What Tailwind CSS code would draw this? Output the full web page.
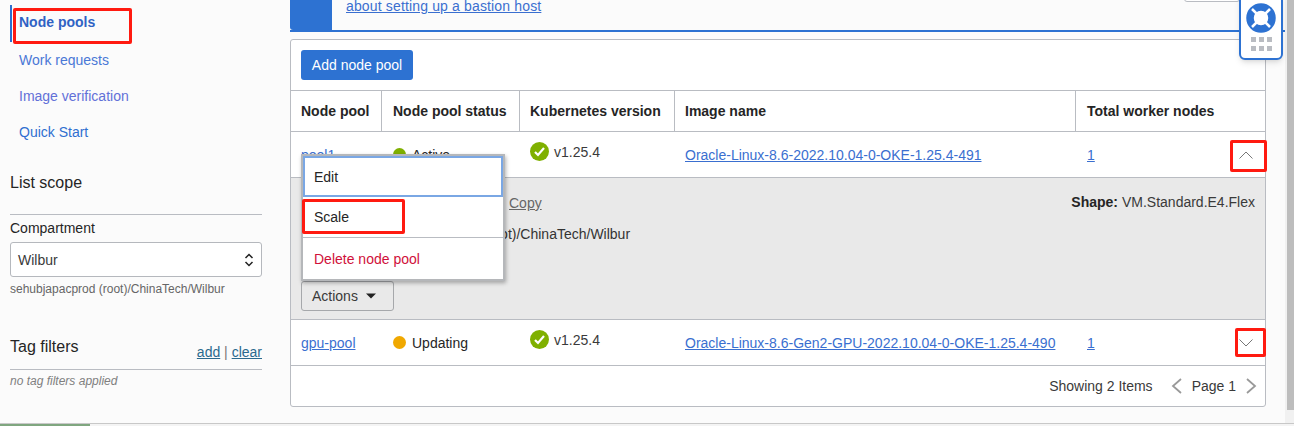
<!DOCTYPE html>
<html>
<head>
<meta charset="utf-8">
<script src="https://cdn.jsdelivr.net/npm/@tailwindcss/browser@4"></script>
</head>
<body class="m-0 bg-white">
<div class="relative h-[426px] w-[1294px] overflow-hidden bg-[#fbfbfb] font-['Liberation_Sans',Arial,sans-serif] text-[14px] leading-[18px] text-[#252525]">
  <div class="flex h-[423px]">
    <!-- Sidebar -->
    <aside class="w-[290px] shrink-0 pl-[10px] pr-[28px] pt-[5px]">
      <nav class="border-l-0 text-[#3a6fd0]">
        <div class="flex h-[37px] items-center border-l-2 border-[#2d6fd0] pl-[7px] pb-[3px] font-bold text-[#2f62c4]">Node pools</div>
        <div class="flex h-[36px] items-center pl-[9px] text-[#4a78d6]">Work requests</div>
        <div class="flex h-[36px] items-center pl-[9px] text-[#6270d8]">Image verification</div>
        <div class="flex h-[36px] items-center pl-[9px] text-[#2f6fd0]">Quick Start</div>
      </nav>
      <h2 class="mt-[23px] text-[16px] leading-[20px] text-[#252525]">List scope</h2>
      <div class="mt-[21px] border-t border-[#b9bcc2] pt-[5px]">
        <div class="leading-[17px]">Compartment</div>
        <div class="mt-[5px] flex h-[35px] items-center justify-between rounded-[3px] border border-[#b5b8bd] bg-white pl-[7px] pr-[7px] text-[#3a3a3a]">
          <span>Wilbur</span>
          <svg width="10" height="16" viewBox="0 0 10 16" fill="none" stroke="#222" stroke-width="1.5"><path d="M1.5 6 5 2.5 8.500 6M1.500 10 5 13.500 8.500 10"/></svg>
        </div>
        <div class="mt-[4px] text-[12px] leading-[16px] text-[#666]">sehubjapacprod (root)/ChinaTech/Wilbur</div>
      </div>
      <div class="mt-[40px] flex items-end justify-between pb-[8px]">
        <h2 class="text-[16px] leading-[20px] text-[#252525]">Tag filters</h2>
        <div class="translate-y-[4px] text-[#777]"><a class="text-[#2b6a8e] underline">add</a> | <a class="text-[#2b6a8e] underline">clear</a></div>
      </div>
      <div class="mt-[4px] border-t border-[#b9bcc2] pt-[3px] text-[12px] italic leading-[17px] text-[#808080]">no tag filters applied</div>
    </aside>

    <!-- Main -->
    <main class="w-[976px] shrink-0">
      <div class="flex h-[32px] border-b-2 border-[#2d72d2] mr-[-20px]">
        <div class="w-[42px] rounded-bl-[3px] bg-[#2d72d2]"></div>
        <a class="ml-[14px] block translate-y-[-3px] tracking-[0.15px] text-[#3a6fd0] underline">about setting up a bastion host</a>
      </div>
      <div class="mt-[7px] h-[368px] rounded-[3px] border border-[#b9bcc2] bg-white">
        <div class="h-[50px] px-[10px] pt-[10px]">
          <button class="h-[30px] w-[112px] rounded-[3px] bg-[#2d72d2] text-[14px] text-white">Add node pool</button>
        </div>
        <div class="grid h-[42px] grid-cols-[91px_138px_155px_401px_1fr] items-center border-y border-[#b9bcc2] font-bold text-[#252525]">
          <div class="flex h-full items-center border-r border-[#b9bcc2] pl-[10px]">Node pool</div>
          <div class="flex h-full items-center border-r border-[#b9bcc2] pl-[11px]">Node pool status</div>
          <div class="flex h-full items-center border-r border-[#b9bcc2] pl-[10px]">Kubernetes version</div>
          <div class="flex h-full items-center border-r border-[#b9bcc2] pl-[10px]">Image name</div>
          <div class="pl-[11px]">Total worker nodes</div>
        </div>
        <!-- Row 1 -->
        <div class="grid h-[46px] grid-cols-[91px_138px_155px_401px_1fr] items-center border-b border-[#b9bcc2]">
          <div class="pl-[10px]"><a class="text-[#3a6fd0] underline">pool1</a></div>
          <div class="flex items-center gap-[6px] pl-[11px]"><span class="size-[13px] rounded-full bg-[#7fb000]"></span>Active</div>
          <div class="flex -translate-y-[3px] items-center gap-[5px] pl-[10px] text-[#3a3a3a]">
            <svg width="19" height="19" viewBox="0 0 19 19"><circle cx="9.500" cy="9.500" r="9.500" fill="#7fb000"/><path d="M5 10l3 3 6-7" fill="none" stroke="#fff" stroke-width="2.200"/></svg>v1.25.4</div>
          <div class="pl-[10px]"><a class="text-[#3a6fd0] underline">Oracle-Linux-8.6-2022.10.04-0-OKE-1.25.4-491</a></div>
          <div class="flex items-center justify-between pl-[11px] pr-[12px]"><a class="text-[#3a6fd0] underline">1</a>
            <svg width="14" height="8" viewBox="0 0 14 8" fill="none" stroke="#777" stroke-width="1"><path d="M.5 7.500 7 1l6.500 6.500"/></svg></div>
        </div>
        <!-- Expanded -->
        <div class="flex h-[142px] justify-between border-b border-[#b9bcc2] bg-[#e9e9e9]">
          <div class="flex flex-col pl-[10px]">
            <div class="flex h-[50px] items-center pl-[208px] text-[#666] underline">Copy</div>
            <div class="pl-[182px] text-[#333] leading-[12px]">(root)/ChinaTech/Wilbur</div>
            <button class="mt-[41px] flex h-[30px] w-[93px] items-center gap-[8px] rounded-[3px] border border-[#a6a8ab] pl-[10px] text-[#3a3a3a]">Actions
              <svg width="10" height="6" viewBox="0 0 10 6"><path d="M0 .5h10L5 5.500z" fill="#222"/></svg></button>
          </div>
          <div class="pr-[10px] pt-[15px] text-[#3a3a3a]"><b class="text-[#252525]">Shape:</b> VM.Standard.E4.Flex</div>
        </div>
        <!-- Row 2 -->
        <div class="grid h-[46px] grid-cols-[91px_138px_155px_401px_1fr] items-center border-b border-[#b9bcc2]">
          <div class="pl-[10px]"><a class="text-[#3a6fd0] underline">gpu-pool</a></div>
          <div class="flex items-center gap-[6px] pl-[11px]"><span class="size-[13px] rounded-full bg-[#f0a800]"></span>Updating</div>
          <div class="flex -translate-y-[3px] items-center gap-[5px] pl-[10px] text-[#3a3a3a]">
            <svg width="19" height="19" viewBox="0 0 19 19"><circle cx="9.500" cy="9.500" r="9.500" fill="#7fb000"/><path d="M5 10l3 3 6-7" fill="none" stroke="#fff" stroke-width="2.200"/></svg>v1.25.4</div>
          <div class="pl-[10px]"><a class="text-[#3a6fd0] underline">Oracle-Linux-8.6-Gen2-GPU-2022.10.04-0-OKE-1.25.4-490</a></div>
          <div class="flex items-center justify-between pl-[11px] pr-[12px]"><a class="text-[#3a6fd0] underline">1</a>
            <svg width="14" height="8" viewBox="0 0 14 8" fill="none" stroke="#777" stroke-width="1"><path d="M.5.5 7 7l6.500-6.500"/></svg></div>
        </div>
        <!-- Footer -->
        <div class="flex h-[40px] items-center justify-end gap-[18px] pr-[8px] text-[#3a3a3a]">
          <span>Showing 2 Items</span>
          <div class="flex items-center gap-[10px]">
            <svg width="11" height="16" viewBox="0 0 11 16" fill="none" stroke="#999" stroke-width="1.800"><path d="M10 1 2 8l8 7"/></svg>
            <span>Page 1</span>
            <svg width="11" height="16" viewBox="0 0 11 16" fill="none" stroke="#999" stroke-width="1.800"><path d="M1 1l8 7-8 7"/></svg>
          </div>
        </div>
      </div>
    </main>
  </div>

  <!-- Bottom bar -->
  <div class="absolute bottom-0 left-0 right-0 h-[3px] border-t border-[#c8c8c8] bg-[#f4f4f4]">
    <div class="h-full w-[90px] bg-[#7fa67f]"></div>
  </div>

  <!-- Scrollbar -->
  <div class="absolute right-0 top-0 h-[423px] w-[9px] bg-[#f1f1f1]">
    <div class="ml-[2px] h-[410px] w-[7px] bg-[#bdbdbd]"></div>
  </div>

  <!-- Top right button piece -->
  <div class="absolute left-[1184px] top-[-10px] h-[12px] w-[56px] rounded-[3px] border border-[#b9bcc2] bg-white"></div>

  <!-- Help widget -->
  <div class="absolute left-[1239px] top-[-6px] flex h-[66px] w-[44px] flex-col items-center rounded-b-[6px] border-2 border-[#2d72d2] bg-white pt-[7px] shadow-md">
    <svg width="30" height="30" viewBox="0 0 30 30"><circle cx="15" cy="15" r="11" fill="none" stroke="#2d72d2" stroke-width="7.500"/><path d="M6 6l5 5M24 6l-5 5M6 24l5-5M24 24l-5-5" stroke="#fff" stroke-width="2.500"/></svg>
    <div class="mt-[4px] grid grid-cols-3 gap-x-[3px] gap-y-[4px]">
      <i class="size-[5px] bg-[#b9bcc2]"></i><i class="size-[5px] bg-[#b9bcc2]"></i><i class="size-[5px] bg-[#b9bcc2]"></i>
      <i class="size-[5px] bg-[#b9bcc2]"></i><i class="size-[5px] bg-[#b9bcc2]"></i><i class="size-[5px] bg-[#b9bcc2]"></i>
    </div>
  </div>

  <!-- Actions menu -->
  <div class="absolute left-[301px] top-[154px] w-[204px] border-2 border-[#b5b7ba] bg-white shadow-[1px_2px_4px_rgba(0,0,0,0.3)]">
    <div class="flex h-[41px] items-center border-2 border-[#7aa7e4] pl-[9px]">Edit</div>
    <div class="flex h-[41px] items-center border-b border-[#b9bcc2] pl-[11px]">Scale</div>
    <div class="flex h-[41px] items-center pl-[11px] text-[#d0103a]">Delete node pool</div>
  </div>

  <!-- Red annotations -->
  <div class="absolute left-[13px] top-[8px] h-[36px] w-[119px] rounded-[2px] border-[3px] border-[#ff1a10]"></div>
  <div class="absolute left-[302px] top-[199px] h-[35px] w-[103px] rounded-[2px] border-[3px] border-[#ff1a10]"></div>
  <div class="absolute left-[1230px] top-[140px] h-[32px] w-[37px] rounded-[2px] border-[3px] border-[#ff1a10]"></div>
  <div class="absolute left-[1235px] top-[328px] h-[29px] w-[31px] rounded-[2px] border-[3px] border-[#ff1a10]"></div>
</div>
</body>
</html>
